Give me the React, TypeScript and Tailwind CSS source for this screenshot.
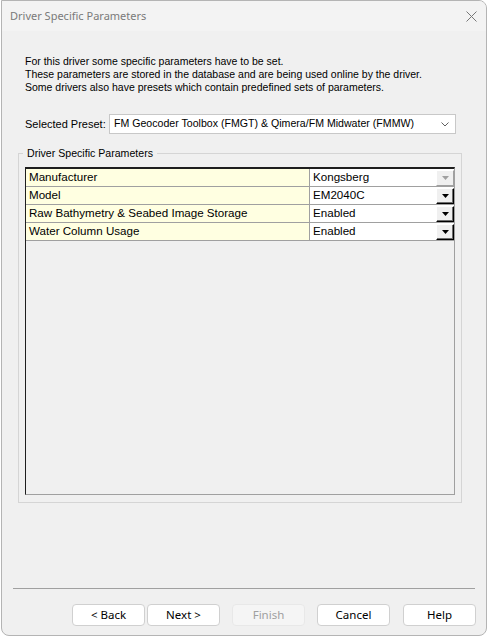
import React from 'react';

const rows = [
  { name: 'Manufacturer', value: 'Kongsberg', locked: true },
  { name: 'Model', value: 'EM2040C', locked: false },
  { name: 'Raw Bathymetry & Seabed Image Storage', value: 'Enabled', locked: false },
  { name: 'Water Column Usage', value: 'Enabled', locked: false },
];

const buttons = [
  { label: '< Back', gap: 'ml-0', disabled: false },
  { label: 'Next >', gap: 'ml-[2px]', disabled: false },
  { label: 'Finish', gap: 'ml-[12px]', disabled: true },
  { label: 'Cancel', gap: 'ml-[12px]', disabled: false },
  { label: 'Help', gap: 'ml-[13px]', disabled: false },
];

const DropButton = ({ locked }: { locked: boolean }) => (
  <div
    className={
      locked
        ? 'w-[18px] h-[16px] mt-px flex items-center justify-center bg-[#f0f0f0] border border-t-white border-l-white border-r-[#a0a0a0] border-b-[#a0a0a0]'
        : 'w-[18px] h-[16px] mt-px flex items-center justify-center bg-[#f0f0f0] border border-t-white border-l-white border-r-black border-b-black shadow-[inset_-1px_-1px_0_#6d6d6d]'
    }
  >
    <svg width="7" height="4" viewBox="0 0 7 4">
      <path d="M0 0h7L3.5 4z" fill={locked ? '#a0a0a0' : '#000'} />
    </svg>
  </div>
);

export default function App() {
  return (
    <div className="w-[488px] h-[637px] bg-white overflow-hidden font-['Liberation_Sans',sans-serif] text-black">
      <div className="ml-px w-[486px] h-[636px] bg-[#f0f0f0] border border-[#b4b4b4] rounded-tr-lg rounded-b-lg flex flex-col overflow-hidden">
        {/* title bar */}
        <div className="h-[30px] shrink-0 bg-[#f3f3f3] flex items-center justify-between pl-[8px] pr-[9px]">
          <span className="font-['Noto_Sans',sans-serif] text-[11px] text-[#7a7a7a]">Driver Specific Parameters</span>
          <svg width="11" height="11" viewBox="0 0 11 11">
            <path d="M0.5 0.5l10 10M10.5 0.5l-10 10" stroke="#777" strokeWidth="1" />
          </svg>
        </div>

        <div className="flex-1 flex flex-col pl-[23px] pr-[24px] pt-[24px] text-[10.5px]">
          <div className="leading-[13px]">
            <p>For this driver some specific parameters have to be set.</p>
            <p>These parameters are stored in the database and are being used online by the driver.</p>
            <p>Some drivers also have presets which contain predefined sets of parameters.</p>
          </div>

          <div className="mt-[20px] flex items-center h-[20px] whitespace-nowrap">
            <span className="w-[84px] shrink-0 text-[11px]">Selected Preset:</span>
            <div className="w-[347px] h-[20px] bg-white border border-[#c8c8c8] flex items-center pl-[4px] pr-[6px]">
              <span className="flex-1 text-[10.6px]">FM Geocoder Toolbox (FMGT) &amp; Qimera/FM Midwater (FMMW)</span>
              <svg width="8" height="5" viewBox="0 0 8 5">
                <path d="M0.5 0.5L4 4L7.5 0.5" stroke="#606060" fill="none" strokeWidth="1" />
              </svg>
            </div>
          </div>

          {/* group box */}
          <div className="relative mt-[19px] -ml-[7px] w-[444px] h-[350px] border border-[#d5d5d5] pt-[13px] pl-[6px] pr-[6px]">
            <span className="absolute -top-[8px] left-[4px] px-[4px] bg-[#f0f0f0] text-[10.6px] leading-[14px]">
              Driver Specific Parameters
            </span>
            <div className="h-[328px] border-t-2 border-l border-t-[#1e1e1e] border-l-[#1e1e1e] border-r border-b border-r-[#a0a0a0] border-b-[#a0a0a0] bg-[#f0f0f0] text-[11.6px]">
              {rows.map((r) => (
                <div key={r.name} className="flex h-[18px] border-b border-[#a0a0a0]">
                  <div className="w-[284px] shrink-0 bg-[#ffffe1] border-r border-[#a0a0a0] pl-[3px] leading-[16px]">
                    {r.name}
                  </div>
                  <div className="flex-1 flex bg-white pl-[3px]">
                    <span className="flex-1 leading-[16px]">{r.value}</span>
                    <DropButton locked={r.locked} />
                  </div>
                </div>
              ))}
            </div>
          </div>
        </div>

        {/* footer */}
        <div className="shrink-0 px-[11px]">
          <div className="h-px bg-[#a0a0a0]" />
        </div>
        <div className="shrink-0 h-[46px] flex items-start justify-end pt-[15px] pr-[10px]">
          {buttons.map((b) => (
            <button
              key={b.label}
              className={
                b.gap +
                (b.disabled
                  ? ' w-[73px] h-[22px] rounded-[4px] border border-[#e8e8e8] bg-[#f5f5f5] text-[#a0a0a0]'
                  : ' w-[73px] h-[22px] rounded-[4px] border border-[#d0d0d0] bg-white text-black') +
                " text-[11.5px] font-['Noto_Sans',sans-serif] leading-[20px]"
              }
            >
              {b.label}
            </button>
          ))}
        </div>
      </div>
    </div>
  );
}
